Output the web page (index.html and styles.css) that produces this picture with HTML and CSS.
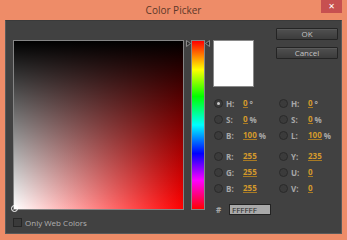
FILE: index.html
```html
<!DOCTYPE html>
<html>
<head>
<meta charset="utf-8">
<link rel="stylesheet" href="styles.css">
</head>
<body>
<div class="window">
  <div class="titlebar">
    <span></span>
    <span class="title">Color Picker</span>
    <span class="close">&#x2715;</span>
  </div>
  <div class="panel">
    <div class="left">
      <div class="field"><span class="marker"></span></div>
      <label class="webonly"><span class="checkbox"></span>Only Web Colors</label>
    </div>
    <div class="hue">
      <div class="arrows">
        <svg width="5" height="7" viewBox="0 0 5 7"><path d="M0.5 0.5 L4.5 3.5 L0.5 6.5 Z" fill="#2e2e2e" stroke="#8a8a8a" stroke-width="1"/></svg>
        <svg width="5" height="7" viewBox="0 0 5 7"><path d="M4.5 0.5 L0.5 3.5 L4.5 6.5 Z" fill="#2e2e2e" stroke="#8a8a8a" stroke-width="1"/></svg>
      </div>
      <div class="huebar"></div>
    </div>
    <div class="right">
      <div class="top">
        <div class="swatch"></div>
        <div class="buttons">
          <button class="btn">OK</button>
          <button class="btn">Cancel</button>
        </div>
      </div>
      <div class="values">
        <div class="group">
          <div class="row"><span class="radio on"></span><span class="lbl">H:</span><span class="val">0</span><span class="unit">&deg;</span></div>
          <div class="row"><span class="radio"></span><span class="lbl">H:</span><span class="val">0</span><span class="unit">&deg;</span></div>
          <div class="row"><span class="radio"></span><span class="lbl">S:</span><span class="val">0</span><span class="unit">%</span></div>
          <div class="row"><span class="radio"></span><span class="lbl">S:</span><span class="val">0</span><span class="unit">%</span></div>
          <div class="row"><span class="radio"></span><span class="lbl">B:</span><span class="val">100</span><span class="unit">%</span></div>
          <div class="row"><span class="radio"></span><span class="lbl">L:</span><span class="val">100</span><span class="unit">%</span></div>
        </div>
        <div class="group">
          <div class="row"><span class="radio"></span><span class="lbl">R:</span><span class="val">255</span></div>
          <div class="row"><span class="radio"></span><span class="lbl">Y:</span><span class="val">235</span></div>
          <div class="row"><span class="radio"></span><span class="lbl">G:</span><span class="val">255</span></div>
          <div class="row"><span class="radio"></span><span class="lbl">U:</span><span class="val">0</span></div>
          <div class="row"><span class="radio"></span><span class="lbl">B:</span><span class="val">255</span></div>
          <div class="row"><span class="radio"></span><span class="lbl">V:</span><span class="val">0</span></div>
        </div>
      </div>
      <div class="hexrow"><span class="hash">#</span><span class="hex">FFFFFF</span></div>
    </div>
  </div>
</div>
</body>
</html>
```
FILE: styles.css
```css
html, body {
  margin: 0;
  padding: 0;
}
body {
  width: 347px;
  height: 240px;
  background: #ee8c68;
  font-family: "Open Sans", "DejaVu Sans", sans-serif;
  overflow: hidden;
}
.window {
  width: 347px;
  height: 240px;
  box-sizing: border-box;
  padding: 0 5px 6px 5px;
  display: flex;
  flex-direction: column;
}
.titlebar {
  height: 20px;
  display: grid;
  grid-template-columns: 1fr auto 1fr;
  align-items: start;
}
.title {
  font-size: 10px;
  color: #5c3829;
  line-height: 20px;
}
.close {
  justify-self: end;
  width: 21px;
  height: 13px;
  background: #c75050;
  color: #fff;
  font-size: 8px;
  font-weight: bold;
  line-height: 13px;
  text-align: center;
  font-family: "DejaVu Sans", sans-serif;
}
.panel {
  flex: 1;
  background: #414141;
  box-sizing: border-box;
  border: 1px solid #5a5a5a;
  border-top-color: #3a3a3a;
  padding: 7px 3px 0 7px;
  display: flex;
  align-items: flex-start;
}
.left {
  margin-top: 12px;
  display: flex;
  flex-direction: column;
}
.field {
  width: 169px;
  height: 168px;
  border: 1px solid #858585;
  background:
    linear-gradient(to bottom, #000, rgba(0,0,0,0)),
    linear-gradient(to right, #fff, #f00);
  display: flex;
  align-items: flex-end;
}
.marker {
  width: 5px;
  height: 5px;
  border: 1px solid #fff;
  border-radius: 50%;
  margin: 0 0 -3px -3px;
}
.webonly {
  margin-top: 8px;
  display: flex;
  align-items: center;
  font-size: 8px;
  line-height: 9px;
  color: #b0b0b0;
  font-weight: 400;
}
.checkbox {
  width: 7px;
  height: 7px;
  border: 1px solid #262626;
  background: #3a3a3a;
  margin-right: 3px;
}
.hue {
  margin-left: 2px;
  margin-top: 12px;
  display: flex;
  flex-direction: column;
}
.arrows {
  display: flex;
  justify-content: space-between;
  width: 24px;
  height: 0;
  overflow: visible;
}
.huebar {
  margin-left: 5px;
  width: 12px;
  height: 168px;
  border: 1px solid #858585;
  background: linear-gradient(to bottom, #f00 0%, #ff0 17%, #0f0 33%, #0ff 50%, #00f 67%, #f0f 83%, #f00 100%);
}
.right {
  margin-left: 3px;
  width: 125px;
  display: flex;
  flex-direction: column;
}
.top {
  display: flex;
  justify-content: space-between;
}
.swatch {
  margin-top: 12px;
  width: 39px;
  height: 45px;
  background: #fff;
  border: 1px solid #8a8a8a;
}
.buttons {
  display: flex;
  flex-direction: column;
  gap: 7px;
}
.btn {
  width: 62px;
  height: 12px;
  margin: 0;
  padding: 0;
  border: 1px solid #242424;
  border-radius: 1px;
  background: linear-gradient(to bottom, #505050, #3c3c3c);
  box-shadow: inset 0 1px 0 #5a5a5a;
  color: #c4c4c4;
  font-family: "Open Sans", "DejaVu Sans", sans-serif;
  font-size: 8px;
  line-height: 10px;
}
.values {
  margin-top: 8px;
  display: flex;
  flex-direction: column;
  gap: 5px;
}
.group {
  display: grid;
  grid-template-columns: 65px 60px;
  grid-auto-rows: 16px;
}
.row {
  display: flex;
  align-items: center;
  font-size: 8px;
  font-weight: 700;
  color: #a8a8a8;
}
.radio {
  width: 7px;
  height: 7px;
  border-radius: 50%;
  border: 1px solid #2a2a2a;
  background: #3b3b3b;
  margin-left: 1px;
  display: flex;
  align-items: center;
  justify-content: center;
}
.radio.on::after {
  content: "";
  width: 3px;
  height: 3px;
  border-radius: 50%;
  background: #c8c8c8;
}
.lbl {
  margin-left: 3px;
  width: 17px;
}
.val {
  color: #d49a2c;
  border-bottom: 1px solid #a87a24;
  line-height: 9px;
}
.unit {
  margin-left: 2px;
}
.hexrow {
  margin-top: 8px;
  display: flex;
  align-items: center;
  font-size: 8px;
  font-weight: 700;
  color: #a8a8a8;
}
.hash {
  margin-left: 3px;
  width: 13px;
}
.hex {
  width: 38px;
  height: 9px;
  border: 1px solid #222;
  background: #a9a9a9;
  color: #2a2a2a;
  font-weight: 400;
  font-size: 8px;
  line-height: 9px;
  padding-left: 2px;
}
```
